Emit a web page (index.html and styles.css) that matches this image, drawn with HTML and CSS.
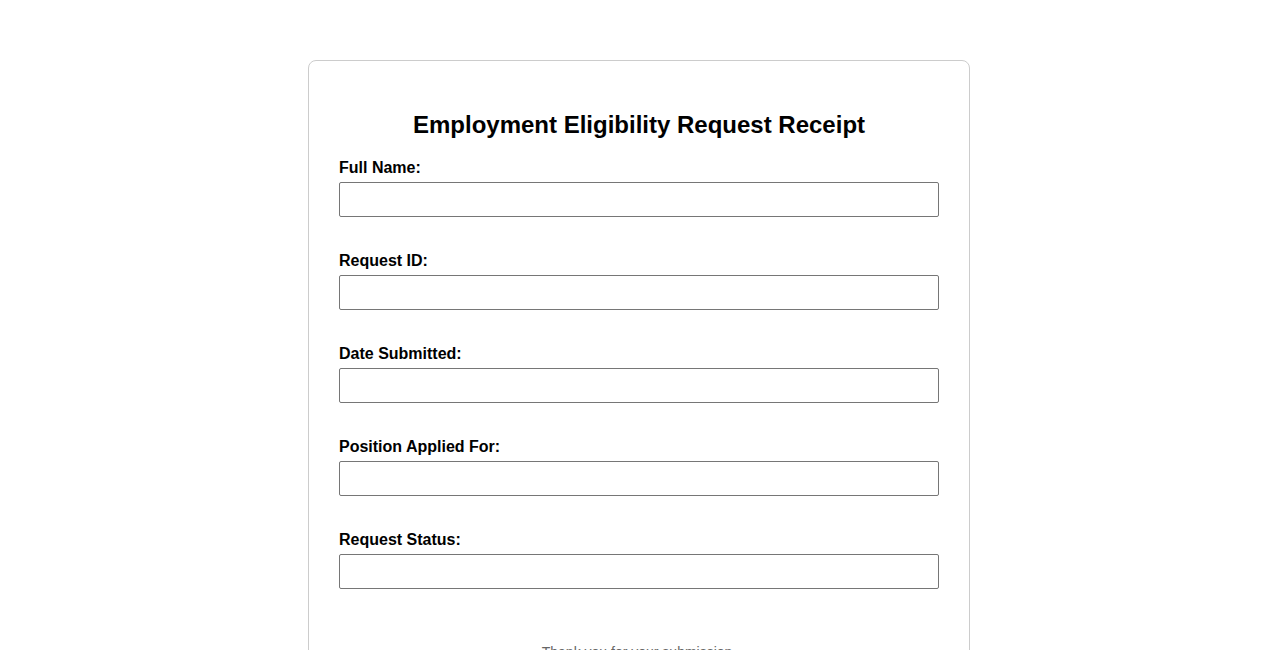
FILE: index.html
```html
<!DOCTYPE html>
<html>
<head>
<meta charset="utf-8">
<title>Employment Eligibility Request Receipt</title>
<link rel="stylesheet" href="styles.css">
</head>
<body>
<div class="card">
  <h2 class="title">Employment Eligibility Request Receipt</h2>
  <div class="group">
    <label class="label">Full Name:</label>
    <input class="field" type="text">
  </div>
  <div class="group">
    <label class="label">Request ID:</label>
    <input class="field" type="text">
  </div>
  <div class="group">
    <label class="label">Date Submitted:</label>
    <input class="field" type="text">
  </div>
  <div class="group">
    <label class="label">Position Applied For:</label>
    <input class="field" type="text">
  </div>
  <div class="group">
    <label class="label">Request Status:</label>
    <input class="field" type="text">
  </div>
  <p class="note">Thank you for your submission.</p>
</div>
</body>
</html>
```

FILE: styles.css
```css
html, body {
  margin: 0;
  padding: 0;
  background: #ffffff;
  font-family: "Liberation Sans", Arial, sans-serif;
  color: #000;
}
.card {
  width: 600px;
  margin: 60px auto 0;
  padding: 30px;
  border: 1px solid #cccccc;
  border-radius: 8px;
}
.title {
  font-size: 24px;
  font-weight: bold;
  text-align: center;
  margin: 20px 0;
}
.group {
  margin-bottom: 35px;
}
.label {
  display: block;
  font-size: 16px;
  font-weight: bold;
  margin-bottom: 5px;
}
.field {
  display: block;
  box-sizing: border-box;
  width: 100%;
  height: 35px;
  padding: 8px;
  margin: 0;
  border: 1px solid #767676;
  border-radius: 2px;
  font-size: 16px;
  font-family: "Liberation Sans", Arial, sans-serif;
}
.note {
  text-align: center;
  font-size: 14px;
  color: #666666;
  margin: 55px 0 20px;
}
```
